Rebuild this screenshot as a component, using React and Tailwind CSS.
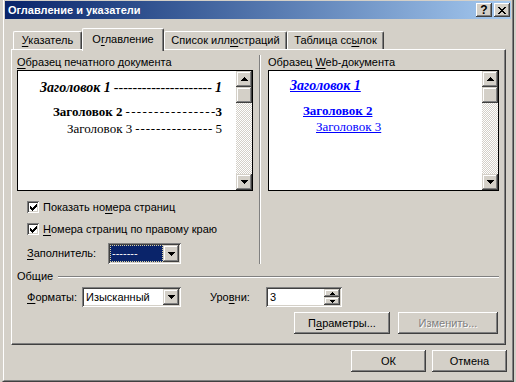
import React from 'react';

// classic win2000 bevels
const raised = 'shadow-[inset_-1px_-1px_#404040,inset_1px_1px_#ffffff,inset_-2px_-2px_#808080,inset_2px_2px_#d4d0c8]';
const raisedSmall = 'shadow-[inset_-1px_-1px_#404040,inset_1px_1px_#d4d0c8,inset_-2px_-2px_#808080,inset_2px_2px_#ffffff]';
const sunken = 'shadow-[inset_1px_1px_#808080,inset_-1px_-1px_#ffffff,inset_2px_2px_#404040,inset_-2px_-2px_#d4d0c8]';

const Pix = ({ rows, className = '' }) => {
  const w = rows[0].length;
  const h = rows.length;
  const rects = [];
  rows.forEach((r, y) =>
    [...r].forEach((c, x) => {
      if (c === 'x') rects.push(<rect key={`${x}-${y}`} x={x} y={y} width="1" height="1" />);
    })
  );
  return (
    <svg width={w} height={h} viewBox={`0 0 ${w} ${h}`} shapeRendering="crispEdges" fill="currentColor" className={className}>
      {rects}
    </svg>
  );
};

const DOWN = ['xxxxxxx', '.xxxxx.', '..xxx..', '...x...'];
const UP = ['...x...', '..xxx..', '.xxxxx.', 'xxxxxxx'];
const SPIN_UP = ['..x..', '.xxx.', 'xxxxx'];
const SPIN_DOWN = ['xxxxx', '.xxx.', '..x..'];
const CHECK = ['......x', '.....xx', 'x...xxx', 'xx.xxx.', 'xxxxx..', '.xxx...', '..x....'];
const CLOSE = ['xx....xx', '.xx..xx.', '..xxxx..', '...xx...', '..xxxx..', '.xx..xx.', 'xx....xx'];

const U = ({ children }) => <span className="underline underline-offset-[2px]">{children}</span>;

const ArrowBtn = ({ rows, className = '' }) => (
  <div className={`bg-[#d4d0c8] ${raisedSmall} flex items-center justify-center text-black ${className}`}>
    <Pix rows={rows} />
  </div>
);

const Scrollbar = () => (
  <div className="w-[16px] shrink-0 flex flex-col">
    <ArrowBtn rows={UP} className="h-[16px]" />
    <div className={`h-[16px] bg-[#d4d0c8] ${raisedSmall}`} />
    <div className="flex-1 bg-[image:repeating-conic-gradient(#ffffff_0_25%,#d4d0c8_0_50%)] bg-[length:2px_2px]" />
    <ArrowBtn rows={DOWN} className="h-[16px]" />
  </div>
);

const Checkbox = () => (
  <div className={`w-[12px] h-[12px] shrink-0 bg-white ${sunken} flex items-center justify-center text-black`}>
    <Pix rows={CHECK} />
  </div>
);

// heading text, tab leader of dashes spread to fill, page number
const Leader = ({ children, num, dashes, className, dashClass }) => (
  <div className={`flex whitespace-nowrap ${className}`}>
    <span>{children}</span>
    <span className={`flex-1 flex justify-between font-normal not-italic ${dashClass}`}>
      {Array.from({ length: dashes }, (_, i) => (
        <span key={i}>-</span>
      ))}
    </span>
    <span>{num}</span>
  </div>
);

const Button = ({ children, className = '', disabled }) => (
  <div
    className={`h-[22px] bg-[#d4d0c8] ${raised} flex items-center justify-center ${
      disabled ? 'text-[#808080] [text-shadow:1px_1px_0_#ffffff]' : 'text-black'
    } ${className}`}
  >
    {children}
  </div>
);

const Tab = ({ children, active, className = '' }) =>
  active ? (
    <div
      className={`relative z-10 h-[23px] -mb-[2px] bg-[#d4d0c8] border-l border-t border-r border-l-white border-t-white border-r-[#404040] rounded-t-[2px] shadow-[inset_-1px_0_#808080] flex justify-center pt-[4px] ${className}`}
    >
      {children}
    </div>
  ) : (
    <div
      className={`h-[18px] bg-[#d4d0c8] border-l border-t border-r border-l-white border-t-white border-r-[#404040] rounded-t-[2px] shadow-[inset_-1px_0_#808080] flex justify-center pt-[2px] ${className}`}
    >
      {children}
    </div>
  );

export default function App() {
  return (
    <div className="w-[516px] h-[382px] overflow-hidden bg-[#d4d0c8] font-['Liberation_Sans',Arial,sans-serif] text-[11px] leading-[13px] text-black">
      <div className="ml-[2px] -mt-[2px] w-[512px] h-[384px] border border-t-[#d4d0c8] border-l-[#d4d0c8] border-r-[#404040] border-b-[#404040]">
        <div className="h-full border border-t-white border-l-white border-r-[#808080] border-b-[#808080] p-[1px] flex flex-col">
          {/* Title bar */}
          <div className="h-[18px] bg-gradient-to-r from-[#0a246a] to-[#a6caf0] flex items-center pl-[3px] pr-[1px]">
            <span className="flex-1 text-white font-bold">Оглавление и указатели</span>
            <div className={`w-[16px] h-[14px] bg-[#d4d0c8] ${raised} flex items-center justify-center font-bold text-[12px] leading-[12px]`}>
              ?
            </div>
            <div className={`ml-[2px] w-[16px] h-[14px] bg-[#d4d0c8] ${raised} flex items-center justify-center`}>
              <Pix rows={CLOSE} />
            </div>
          </div>

          {/* Tabs */}
          <div className="ml-[6px] mt-[9px]">
            <div className="flex items-end pl-[2px] h-[21px]">
              <Tab className="w-[69px]">
                <span><U>У</U>казатель</span>
              </Tab>
              <Tab active className="w-[82px]">
                <span>О<U>г</U>лавление</span>
              </Tab>
              <Tab className="w-[123px]">
                <span>Список илл<U>ю</U>страций</span>
              </Tab>
              <Tab className="w-[97px]">
                <span>Таблица сс<U>ы</U>лок</span>
              </Tab>
            </div>

            <div className="w-[495px] h-[296px] border border-t-white border-l-white border-r-[#404040] border-b-[#404040] shadow-[inset_-1px_-1px_#808080] pt-[5px] pl-[5px] pr-[6px]">
              <div className="flex">
                {/* Print preview */}
                <div className="w-[236px] shrink-0">
                  <div className="mt-[1px] h-[13px]">
                    <U>О</U>бразец печатного документа
                  </div>
                  <div className="mt-[1px] h-[121px] border border-black bg-white flex">
                    <div className="flex-1 min-w-0 overflow-hidden pt-[9px] pr-[14px] font-['Liberation_Serif','Times_New_Roman',serif] text-black">
                      <Leader num="1" dashes={21} dashClass="px-[3px]" className="pl-[22px] text-[14px] leading-[16px] font-bold italic">
                        Заголовок 1
                      </Leader>
                      <Leader num="3" dashes={16} dashClass="pl-[3px]" className="pl-[35px] mt-[8px] text-[13px] leading-[16px] font-bold">
                        Заголовок 2
                      </Leader>
                      <Leader num="5" dashes={15} dashClass="px-[3px]" className="pl-[49px] mt-[1px] text-[13px] leading-[16px]">
                        Заголовок 3
                      </Leader>
                    </div>
                    <Scrollbar />
                  </div>

                  <div className="mt-[5px] h-[22px] flex items-center pl-[10px]">
                    <Checkbox />
                    <span className="ml-[4px]">
                      Показать но<U>м</U>ера страниц
                    </span>
                  </div>
                  <div className="h-[22px] flex items-center pl-[10px]">
                    <Checkbox />
                    <span className="ml-[4px]">
                      <U>Н</U>омера страниц по правому краю
                    </span>
                  </div>
                  <div className="mt-[3px] h-[21px] flex items-center pl-[10px]">
                    <span className="w-[81px]">
                      <U>З</U>аполнитель:
                    </span>
                    <div className={`w-[73px] h-[21px] bg-white ${sunken} p-[2px] flex`}>
                      <div className="flex-1 bg-[#0a246a] border border-dotted border-[#d8d0a0] text-white pl-[1px] leading-[14px]">
                        -------
                      </div>
                      <ArrowBtn rows={DOWN} className="w-[16px]" />
                    </div>
                  </div>
                </div>

                <div className="ml-[6px] mr-[7px] w-[2px] shrink-0 border-l border-l-[#808080] border-r border-r-white" />

                {/* Web preview */}
                <div className="w-[231px] shrink-0">
                  <div className="mt-[1px] h-[13px]">
                    Образец <U>W</U>eb-документа
                  </div>
                  <div className="mt-[1px] h-[121px] border border-black bg-white flex">
                    <div className="flex-1 min-w-0 pt-[7px] font-['Liberation_Serif','Times_New_Roman',serif] text-[#0000ff]">
                      <div className="pl-[21px] text-[14px] leading-[16px] font-bold italic">
                        <span className="underline">Заголовок 1</span>
                      </div>
                      <div className="pl-[34px] mt-[9px] text-[13px] leading-[16px] font-bold">
                        <span className="underline">Заголовок 2</span>
                      </div>
                      <div className="pl-[47px] text-[13px] leading-[15px]">
                        <span className="underline">Заголовок 3</span>
                      </div>
                    </div>
                    <Scrollbar />
                  </div>
                </div>
              </div>

              {/* General */}
              <div className="mt-[6px] h-[13px] flex items-center">
                <span>Общие</span>
                <div className="ml-[5px] flex-1 h-[2px] border-t border-t-[#808080] border-b border-b-white" />
              </div>

              <div className="mt-[4px] h-[20px] flex items-center pl-[10px]">
                <span className="w-[55px]">
                  <U>Ф</U>орматы:
                </span>
                <div className={`w-[99px] h-[20px] bg-white ${sunken} p-[2px] flex`}>
                  <div className="flex-1 pl-[2px] leading-[16px]">Изысканный</div>
                  <ArrowBtn rows={DOWN} className="w-[16px]" />
                </div>
                <span className="ml-[29px] w-[56px]">
                  Уро<U>в</U>ни:
                </span>
                <div className={`w-[76px] h-[20px] bg-white ${sunken} p-[2px] flex`}>
                  <div className="flex-1 pl-[2px] leading-[16px]">3</div>
                  <div className="w-[16px] flex flex-col">
                    <ArrowBtn rows={SPIN_UP} className="h-[8px]" />
                    <ArrowBtn rows={SPIN_DOWN} className="h-[8px]" />
                  </div>
                </div>
              </div>

              <div className="mt-[5px] flex justify-end gap-[8px] pr-[1px]">
                <Button className="w-[96px]">
                  <span>
                    П<U>а</U>раметры...
                  </span>
                </Button>
                <Button className="w-[100px]" disabled>
                  Изменить...
                </Button>
              </div>
            </div>
          </div>

          {/* OK / Cancel */}
          <div className="mt-[5px] flex justify-end gap-[6px] pr-[4px]">
            <Button className="w-[75px] h-[21px]">ОК</Button>
            <Button className="w-[75px] h-[21px]">Отмена</Button>
          </div>
        </div>
      </div>
    </div>
  );
}
